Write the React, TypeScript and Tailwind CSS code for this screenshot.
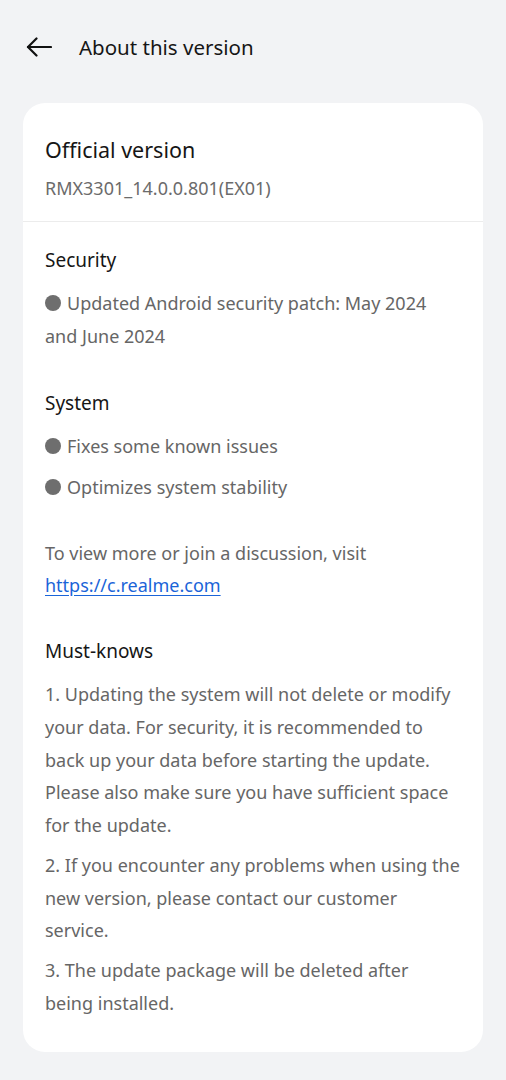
import React from 'react';

const body = 'text-[18px] leading-[32.75px] text-[#666666]';

const Dot = () => (
  <span className="mr-[6px] inline-block h-[16px] w-[16px] translate-y-[1px] rounded-full bg-[#6e6e6e]" />
);

const App: React.FC = () => {
  return (
    <div className="min-h-[1080px] w-full bg-[#f2f3f5] pb-[29px] font-['Noto_Sans',sans-serif]">
      <div className="flex h-[94px] items-center pl-[26px]">
        <svg width="26" height="20" viewBox="0 0 26 20" fill="none" stroke="#111" strokeWidth="2.2" strokeLinecap="round" strokeLinejoin="round">
          <path d="M2 10h23" />
          <path d="M10.5 1.5L2 10l8.5 8.5" />
        </svg>
        <h1 className="ml-[27px] text-[20.5px] text-[#161616]">About this version</h1>
      </div>

      <div className="mx-[23px] mt-[9px] rounded-[22px] bg-white">
        <div className="px-[22px] pt-[32px] pb-[18px]">
          <h2 className="text-[21.5px] leading-[30px] text-[#161616]">Official version</h2>
          <p className="mt-[8px] text-[18px] leading-[30px] text-[#6b6b6b]">RMX3301_14.0.0.801(EX01)</p>
        </div>
        <div className="h-px bg-[#ececec]" />

        <div className="px-[22px] pt-[23px] pb-[32px]">
          <h3 className="text-[19px] leading-[30px] text-[#161616]">Security</h3>
          <p className={`${body} mt-[12px]`}>
            <Dot />Updated Android security patch: May 2024 and June 2024
          </p>

          <h3 className="mt-[35px] text-[19px] leading-[30px] text-[#161616]">System</h3>
          <div className="mt-[12px] flex flex-col gap-[8.5px]">
            <p className={body}><Dot />Fixes some known issues</p>
            <p className={body}><Dot />Optimizes system stability</p>
          </div>

          <p className={`${body} mt-[33px]`}>
            To view more or join a discussion, visit{' '}
            <a href="#" className="text-[#1a64d8] underline underline-offset-[3px]">https://c.realme.com</a>
          </p>

          <h3 className="mt-[34px] text-[19px] leading-[30px] text-[#161616]">Must-knows</h3>
          <div className="mt-[12px] flex flex-col gap-[7px]">
            <p className={body}>
              1. Updating the system will not delete or modify your data. For security, it is recommended to back up your data before starting the update. Please also make sure you have sufficient space for the update.
            </p>
            <p className={body}>
              2. If you encounter any problems when using the new version, please contact our customer service.
            </p>
            <p className={body}>3. The update package will be deleted after being installed.</p>
          </div>
        </div>
      </div>
    </div>
  );
};

export default App;
